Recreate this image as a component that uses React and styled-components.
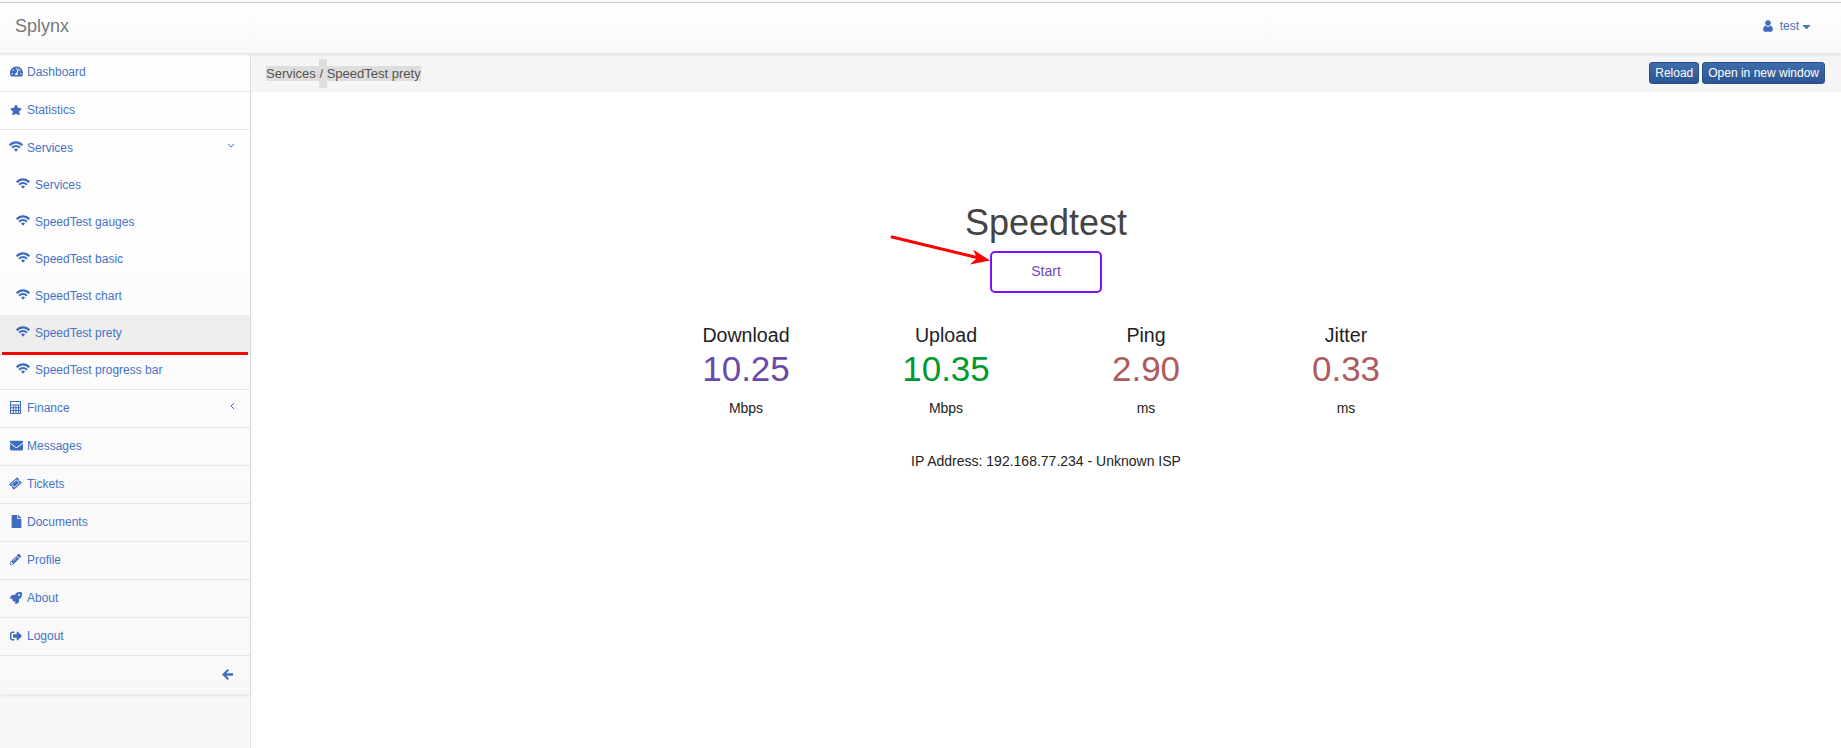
import React from 'react';
import styled, { createGlobalStyle } from 'styled-components';
import {
	FaTachometerAlt, FaStar, FaEnvelope, FaTicketAlt, FaFile, FaPencilAlt,
	FaRocket, FaSignOutAlt, FaCaretDown,
} from 'react-icons/fa';

const Global = createGlobalStyle`
	html, body { margin: 0; padding: 0; height: 100%; background: #fff; }
	body { font-family: "Liberation Sans", Arial, sans-serif; font-size: 14px; color: #222; overflow: hidden; }
`;

const blue = '#4573c6';

const Page = styled.div`
	display: flex;
	flex-direction: column;
	height: 748px;
	padding-top: 2px;
	box-sizing: border-box;
`;

const Navbar = styled.header`
	position: relative;
	z-index: 3;
	display: flex;
	align-items: center;
	justify-content: space-between;
	flex: none;
	height: 51px;
	box-sizing: border-box;
	padding: 0 28px 4px 15px;
	border-top: 1px solid #cfcfcf;
	background: linear-gradient(to bottom, #ffffff 0%, #f8f8f8 100%);
	box-shadow: 0 1px 3px rgba(0, 0, 0, .16);
`;

const Brand = styled.div`
	font-size: 18px;
	color: #777;
`;

const UserMenu = styled.div`
	display: flex;
	align-items: center;
	font-size: 12px;
	color: ${blue};
	svg:first-child { margin-right: 7px; color: #3f6cbf; }
	svg:last-child { font-size: 13px; margin-left: 1px; }
`;

const Body = styled.div`
	display: flex;
	flex: 1;
	min-height: 0;
	padding-top: 1px;
`;

const Sidebar = styled.aside`
	flex: none;
	width: 251px;
	box-sizing: border-box;
	border-right: 1px solid #e2e2e2;
	background: #f8f8f8;
`;

const Menu = styled.nav`
	background: linear-gradient(to bottom, #ffffff 0%, #f8f8f8 100%);
	box-shadow: 0 2px 4px rgba(0, 0, 0, .08);
`;

const Row = styled.div`
	position: relative;
	display: flex;
	align-items: center;
	box-sizing: border-box;
	height: ${({ $h }) => $h || 38}px;
	padding-left: ${({ $sub }) => ($sub ? 17 : 10)}px;
	padding-bottom: 2px;
	border-bottom: ${({ $noLine }) => ($noLine ? 'none' : '1px solid #e6e6e6')};
	background: ${({ $active }) => ($active ? '#eeeeee' : 'transparent')};
	font-size: 12px;
	color: ${blue};
`;

const IconSlot = styled.span`
	display: flex;
	align-items: center;
	justify-content: flex-start;
	flex: none;
	width: ${({ $sub }) => ($sub ? 18 : 17)}px;
	font-size: ${({ $size }) => $size || 12}px;
	color: #3f6cbf;
`;

const WifiSlot = styled(IconSlot)`
	margin-top: -2px;
	margin-left: -1px;
	width: ${({ $sub }) => ($sub ? 19 : 18)}px;
`;

const RowArrow = styled.svg`
	margin-left: auto;
	margin-right: ${({ $right }) => $right}px;
	margin-top: -4px;
`;

const RedLine = styled.div`
	position: absolute;
	left: 2px;
	right: 2px;
	top: 37px;
	height: 3px;
	background: #ff0000;
	z-index: 1;
`;

const Collapse = styled.div`
	display: flex;
	justify-content: flex-end;
	align-items: center;
	height: 38px;
	padding-right: 17px;
	padding-bottom: 2px;
	box-sizing: border-box;
	color: #3f6cbf;
`;

const Main = styled.main`
	position: relative;
	flex: 1;
	min-width: 0;
`;

const Crumbs = styled.div`
	display: flex;
	align-items: center;
	justify-content: space-between;
	height: 38px;
	margin-left: 1px;
	padding: 0 16px 0 14px;
	background: #f5f5f5;
`;

const CrumbText = styled.div`
	display: flex;
	align-items: center;
	font-size: 13px;
	color: #555;
`;

const Marked = styled.span`
	display: flex;
	align-items: center;
	height: ${({ $tall }) => ($tall ? 29 : 15)}px;
	background: #dfdedc;
	white-space: pre;
`;

const Actions = styled.div`
	display: flex;
	gap: 3px;
`;

const ActionButton = styled.button`
	height: 22px;
	padding: 0 5px;
	border: 1px solid #2a4f86;
	border-radius: 3px;
	background: linear-gradient(to bottom, #3f6dab 0%, #2d5592 100%);
	color: #fff;
	font: 12px "Liberation Sans", Arial, sans-serif;
`;

const Test = styled.section`
	display: flex;
	flex-direction: column;
	align-items: center;
	padding-top: 110px;
`;

const Title = styled.h1`
	margin: 0;
	font-size: 36px;
	font-weight: 400;
	line-height: 41px;
	color: #444;
`;

const StartButton = styled.div`
	display: flex;
	align-items: center;
	justify-content: center;
	width: 112px;
	height: 42px;
	box-sizing: border-box;
	margin-top: 8px;
	padding-bottom: 3px;
	border: 2px solid #7f0fff;
	border-radius: 5px;
	font-size: 14px;
	color: #7148ba;
`;

const Stats = styled.div`
	display: flex;
	margin-top: 30px;
`;

const Stat = styled.div`
	display: flex;
	flex-direction: column;
	align-items: center;
	width: 200px;
`;

const StatLabel = styled.div`
	font-size: 19.6px;
	line-height: 24px;
	color: #222;
`;

const StatValue = styled.div`
	font-size: 35px;
	line-height: 44px;
	color: ${({ $color }) => $color};
`;

const StatUnit = styled.div`
	margin-top: 9px;
	font-size: 14px;
	line-height: 16px;
	color: #222;
`;

const IpLine = styled.div`
	margin-top: 37px;
	font-size: 14px;
	line-height: 16px;
	color: #222;
`;

const Arrow = styled.svg`
	position: absolute;
	left: 638px;
	top: 180px;
`;

const WifiIcon = () => (
	<svg width="14" height="11" viewBox="0 0 13 10">
		<path d="M.7 3.9C3.9.3 9.1.3 12.3 3.9" stroke="currentColor" strokeWidth="2" fill="none" />
		<path d="M2.9 6.1C4.9 4 8.1 4 10.1 6.1" stroke="currentColor" strokeWidth="2" fill="none" />
		<path d="M4.6 7.7C5.7 6.7 7.3 6.7 8.4 7.7L6.5 9.9Z" fill="currentColor" />
	</svg>
);

const UserIcon = () => (
	<svg width="10" height="12" viewBox="0 0 10 12">
		<circle cx="5" cy="3" r="2.8" fill="currentColor" />
		<path d="M.2 9.4C.2 7.2 1.4 5.8 2.7 5.8C3.4 6.4 4.1 6.7 5 6.7C5.9 6.7 6.6 6.4 7.3 5.8C8.6 5.8 9.8 7.2 9.8 9.4C9.8 11 8.9 11.8 7.7 11.8H2.3C1.1 11.8 .2 11 .2 9.4Z" fill="currentColor" />
	</svg>
);

const BackIcon = () => (
	<svg width="11" height="11" viewBox="0 0 11 11">
		<path d="M5.6 0L7 1.4L4.2 4.2H11V6.8H4.2L7 9.6L5.6 11L0 5.5Z" fill="currentColor" />
	</svg>
);

const CalculatorIcon = () => (
	<svg width="11" height="13" viewBox="0 0 11 13">
		<path fill="currentColor" fillRule="evenodd" d="M0 0h11v13H0zM1 1v2.5h9V1zM1 4.5v1.7h1.8V4.5zM3.8 4.5v1.7h1.6V4.5zM6.4 4.5v1.7H8V4.5zM9 4.5v1.7h1V4.5zM1 7.2v1.7h1.8V7.2zM3.8 7.2v1.7h1.6V7.2zM6.4 7.2v1.7H8V7.2zM9 7.2v1.7h1V7.2zM1 9.9V12h1.8V9.9zM3.8 9.9V12h1.6V9.9zM6.4 9.9V12H8V9.9zM9 9.9V12h1V9.9z" />
	</svg>
);

const top = [
	{ label: 'Dashboard', icon: <FaTachometerAlt />, size: 13 },
	{ label: 'Statistics', icon: <FaStar />, size: 12 },
];

const sub = ['Services', 'SpeedTest gauges', 'SpeedTest basic', 'SpeedTest chart', 'SpeedTest prety', 'SpeedTest progress bar'];

const bottom = [
	{ label: 'Messages', icon: <FaEnvelope />, size: 13 },
	{ label: 'Tickets', icon: <FaTicketAlt style={{ transform: 'rotate(-40deg)' }} />, size: 11 },
	{ label: 'Documents', icon: <FaFile />, size: 13 },
	{ label: 'Profile', icon: <FaPencilAlt />, size: 11 },
	{ label: 'About', icon: <FaRocket />, size: 12 },
	{ label: 'Logout', icon: <FaSignOutAlt />, size: 12 },
];

const stats = [
	{ label: 'Download', value: '10.25', unit: 'Mbps', color: '#6a49ad' },
	{ label: 'Upload', value: '10.35', unit: 'Mbps', color: '#009a2e' },
	{ label: 'Ping', value: '2.90', unit: 'ms', color: '#ad5a60' },
	{ label: 'Jitter', value: '0.33', unit: 'ms', color: '#ad5a60' },
];

const App = () => (
	<Page>
		<Global />
		<Navbar>
			<Brand>Splynx</Brand>
			<UserMenu><UserIcon />test<FaCaretDown /></UserMenu>
		</Navbar>
		<Body>
			<Sidebar>
				<Menu>
					{top.map((item) => (
						<Row key={item.label}><IconSlot $size={item.size}>{item.icon}</IconSlot>{item.label}</Row>
					))}
					<Row $h={37} $noLine>
						<WifiSlot><WifiIcon /></WifiSlot>Services
						<RowArrow $right={15} width="8" height="5" viewBox="0 0 8 5">
							<path d="M1 1l3 3 3-3" stroke={blue} strokeWidth="1" fill="none" />
						</RowArrow>
					</Row>
					{sub.map((label, i) => (
						<Row
							key={label}
							$sub
							$h={i === sub.length - 1 ? 38 : 37}
							$noLine={i !== sub.length - 1}
							$active={label === 'SpeedTest prety'}
						>
							<WifiSlot $sub><WifiIcon /></WifiSlot>{label}
							{label === 'SpeedTest prety' && <RedLine />}
						</Row>
					))}
					<Row>
						<IconSlot><CalculatorIcon /></IconSlot>Finance
						<RowArrow $right={15} width="5" height="8" viewBox="0 0 5 8">
							<path d="M4 1L1 4l3 3" stroke={blue} strokeWidth="1" fill="none" />
						</RowArrow>
					</Row>
					{bottom.map((item) => (
						<Row key={item.label}><IconSlot $size={item.size}>{item.icon}</IconSlot>{item.label}</Row>
					))}
					<Collapse><BackIcon /></Collapse>
				</Menu>
			</Sidebar>
			<Main>
				<Crumbs>
					<CrumbText>
						<Marked>Services </Marked>
						<Marked $tall>/ </Marked>
						<Marked>SpeedTest prety</Marked>
					</CrumbText>
					<Actions>
						<ActionButton>Reload</ActionButton>
						<ActionButton>Open in new window</ActionButton>
					</Actions>
				</Crumbs>
				<Test>
					<Title>Speedtest</Title>
					<StartButton>Start</StartButton>
					<Stats>
						{stats.map((s) => (
							<Stat key={s.label}>
								<StatLabel>{s.label}</StatLabel>
								<StatValue $color={s.color}>{s.value}</StatValue>
								<StatUnit>{s.unit}</StatUnit>
							</Stat>
						))}
					</Stats>
					<IpLine>IP Address: 192.168.77.234 - Unknown ISP</IpLine>
				</Test>
				<Arrow width="104" height="32" viewBox="0 0 104 32">
					<path d="M3 3L90 24" stroke="#ff0000" strokeWidth="3" strokeLinecap="round" fill="none" />
					<path d="M101 26.5L84 15.5L88 24L81 30.5Z" fill="#ff0000" />
				</Arrow>
			</Main>
		</Body>
	</Page>
);

export default App;
